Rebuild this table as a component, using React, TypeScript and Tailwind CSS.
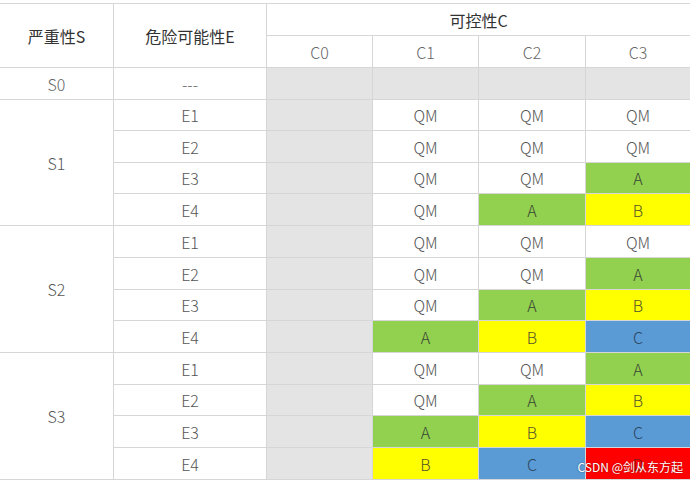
import React from 'react';

type Level = 'QM' | 'A' | 'B' | 'C' | 'D';

const levelColor: Record<Level, string> = {
  QM: 'bg-white text-[#555]',
  A: 'bg-[#92d050] text-[#3a4632]',
  B: 'bg-[#ffff00] text-[#55552a]',
  C: 'bg-[#5b9bd5] text-[#2a4560]',
  D: 'bg-[#ff0000] text-[#7a1a1a]',
};

// severity -> rows of [C1, C2, C3]
const matrix: { s: string; rows: Level[][] }[] = [
  { s: 'S1', rows: [['QM', 'QM', 'QM'], ['QM', 'QM', 'QM'], ['QM', 'QM', 'A'], ['QM', 'A', 'B']] },
  { s: 'S2', rows: [['QM', 'QM', 'QM'], ['QM', 'QM', 'A'], ['QM', 'A', 'B'], ['A', 'B', 'C']] },
  { s: 'S3', rows: [['QM', 'QM', 'A'], ['QM', 'A', 'B'], ['A', 'B', 'C'], ['B', 'C', 'D']] },
];

const cell = 'flex items-center justify-center';

export default function App() {
  const font = { fontFamily: '"Noto Sans CJK SC", "Open Sans", sans-serif' };

  return (
    <div className="relative w-[690px] h-[482px] bg-white overflow-hidden" style={font}>
      <div className="pt-[3px]">
        <div className="grid gap-px bg-[#d6d6d6] border-y border-[#d6d6d6] grid-cols-[113px_152px_105px_105px_106px_104px] grid-rows-[31px_31px_31px_30px_31px_30px_31px_31px_31px_30px_31px_31px_30px_31px_31px] text-[16px]">
          <div className={`${cell} row-span-2 bg-white text-[#333]`}>严重性S</div>
          <div className={`${cell} row-span-2 bg-white text-[#333]`}>危险可能性E</div>
          <div className={`${cell} col-span-4 bg-white text-[#333]`}>可控性C</div>
          {['C0', 'C1', 'C2', 'C3'].map((c) => (
            <div key={c} className={`${cell} bg-white text-[#666] font-light`}>
              {c}
            </div>
          ))}

          <div className={`${cell} bg-white text-[#666] font-light`}>S0</div>
          <div className={`${cell} bg-white text-[#666] font-light`}>---</div>
          <div className="bg-[#e4e4e4]" />
          <div className="bg-[#e4e4e4]" />
          <div className="bg-[#e4e4e4]" />
          <div className="bg-[#e4e4e4]" />

          {matrix.map((group) =>
            group.rows.map((row, i) => (
              <React.Fragment key={group.s + i}>
                {i === 0 && (
                  <div className={`${cell} row-span-4 bg-white text-[#555] font-light`}>{group.s}</div>
                )}
                <div className={`${cell} bg-white text-[#555] font-light`}>E{i + 1}</div>
                <div className="bg-[#e4e4e4]" />
                {row.map((lv, j) => (
                  <div key={j} className={`${cell} font-light ${levelColor[lv]}`}>
                    {lv}
                  </div>
                ))}
              </React.Fragment>
            ))
          )}
        </div>
      </div>

      <div className="absolute right-[7px] bottom-[6px] text-[12px] text-white [text-shadow:0_0_2px_rgba(0,0,0,0.45)]">
        CSDN @剑从东方起
      </div>
    </div>
  );
}
